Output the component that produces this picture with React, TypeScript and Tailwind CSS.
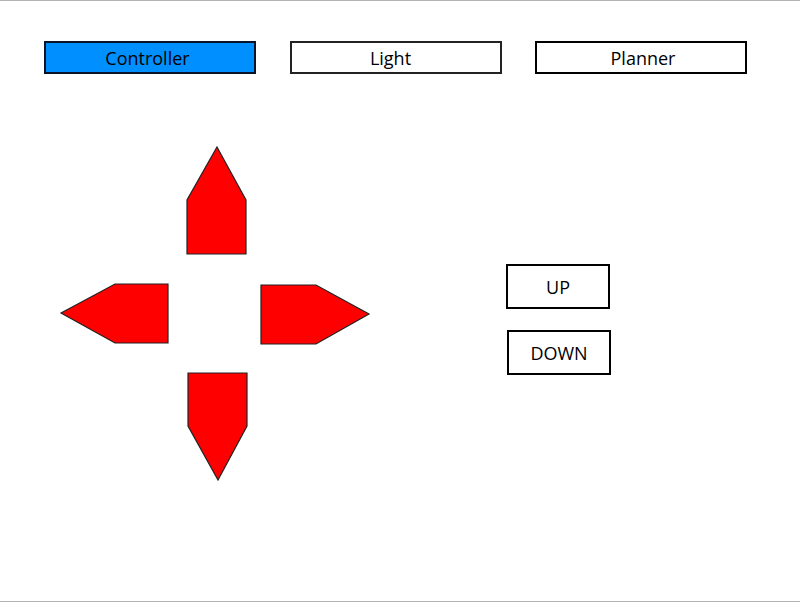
import React from "react";

export default function App() {
  const tabFont = { fontFamily: '"Open Sans", "Noto Sans", sans-serif' };
  return (
    <div className="w-[800px] h-[602px] bg-white border-t border-b border-[#b3b3b3] overflow-hidden" style={tabFont}>
      <div className="flex pt-[40px] pl-[44px]">
        <div className="w-[212px] h-[33px] bg-[#008fff] border-2 border-[#0a1428] flex items-center justify-center pr-[5px] text-[18px] text-black leading-none">
          Controller
        </div>
        <div className="ml-[34px] w-[212px] h-[33px] bg-white border-2 border-[#222] flex items-center justify-center pr-[11px] text-[18px] text-black leading-none">
          Light
        </div>
        <div className="ml-[33px] w-[212px] h-[33px] bg-white border-2 border-black flex items-center justify-center pl-[4px] text-[18px] text-black leading-none">
          Planner
        </div>
      </div>
      <div className="flex items-start">
        <svg className="ml-[58px] mt-[70px]" width="314" height="340" viewBox="0 0 314 340">
          <g fill="#ff0000" stroke="#222" strokeWidth="1.2" strokeLinejoin="miter">
            <polygon points="159,3 188,56 188,110 129,110 129,56" />
            <polygon points="3,169 57,140 110,140 110,199 57,199" />
            <polygon points="203,141 258,141 311,170 258,200 203,200" />
            <polygon points="130,229 189,229 189,282 160,336 130,282" />
          </g>
        </svg>
        <div className="ml-[134px] mt-[190px] flex flex-col gap-[21px]">
          <div className="w-[104px] h-[45px] border-2 border-black flex items-center justify-center text-[18px] text-black leading-none">
            UP
          </div>
          <div className="ml-[1px] w-[104px] h-[45px] border-2 border-black flex items-center justify-center text-[18px] text-black leading-none">
            DOWN
          </div>
        </div>
      </div>
    </div>
  );
}
